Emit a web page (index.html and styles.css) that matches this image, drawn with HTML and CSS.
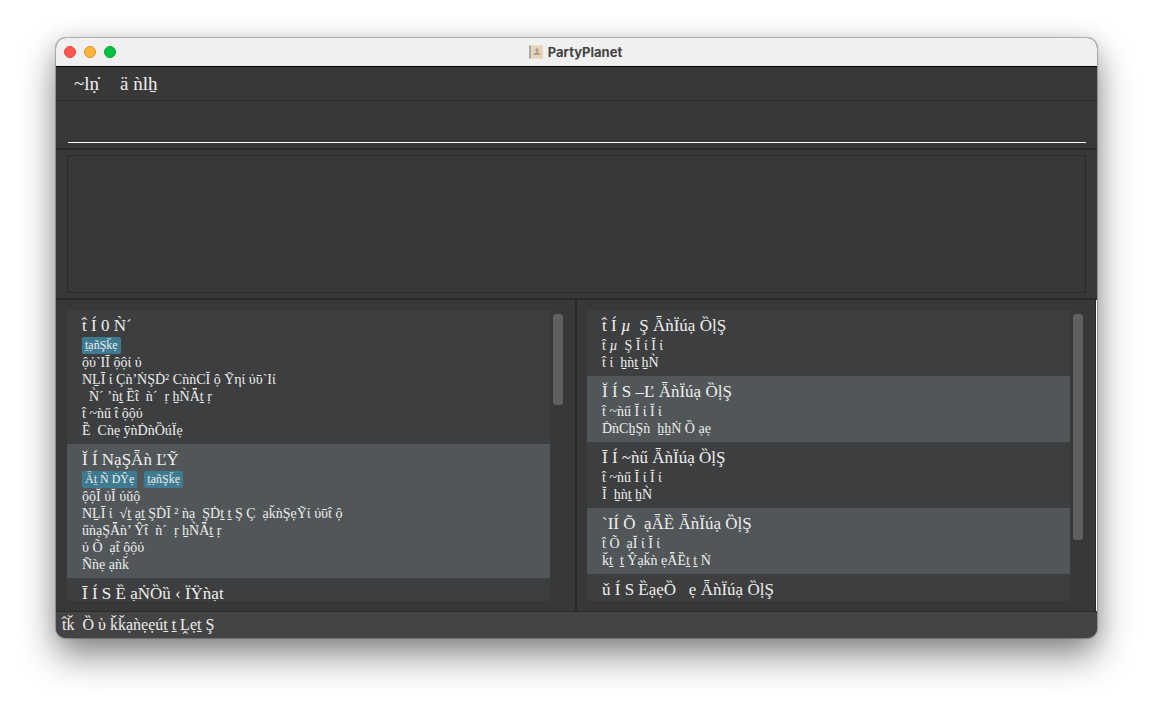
FILE: index.html
```
<!DOCTYPE html>
<html lang="en">
<head>
<meta charset="utf-8">
<title>PartyPlanet</title>
<link rel="stylesheet" href="styles.css">
</head>
<body>
<main class="window">
  <header class="titlebar">
    <div class="lights">
      <button class="light close" aria-label="Close"></button>
      <button class="light minimise" aria-label="Minimise"></button>
      <button class="light zoom" aria-label="Zoom"></button>
    </div>
    <h1 class="title">
      <svg class="app-icon" viewBox="0 0 14 14" aria-hidden="true">
        <rect x="0" y="0.5" width="14" height="13" rx="1" fill="#e9d3b4"/>
        <rect x="0" y="0.5" width="2" height="13" fill="#aaa9a7"/>
        <rect x="2" y="0.5" width="1" height="13" fill="#d9d5cf"/>
        <circle cx="8" cy="5" r="1.7" fill="#aaa197"/>
        <path d="M7.2 6h1.6v1.4L11.3 8.5V10H4.7V8.5l2.5-1.1z" fill="#aaa197"/>
      </svg>
      <span>PartyPlanet</span>
    </h1>
  </header>
  <nav class="menu">
    <button class="menu-item">~lṇ̇</button>
    <button class="menu-item">ä ǹlẖ</button>
  </nav>
  <section class="command"><input class="command-input" type="text" aria-label="Command"></section>
  <section class="result"><textarea class="result-text" readonly aria-label="Result"></textarea></section>
  <section class="panes">
    <div class="pane">
      <ul class="list">
        <li class="card">
          <h2 class="name">t̂ Í 0 Ǹˊ</h2>
          <div class="tags"><span class="tag">ṯạñŞǩẹ</span></div>
          <p class="line">ộύˋIĪ ộộί ύ</p>
          <p class="line">NḺĪ ί Çǹ’ṄŞḊ² CǹǹCĬ ộ Ỹηί ύῡˋIί</p>
          <p class="line">  Ǹˊ ’ǹṯ Ȅt̂  ǹˊ  ṛ ẖǸǞṯ ṛ</p>
          <p class="line">t̂ ~ǹű t̂ ộộύ</p>
          <p class="line">Ȅ  Cǹẹ ȳǹḊǹȌúÏẹ</p>
        </li>
        <li class="card">
          <h2 class="name">Ĭ Í NạŞǞǹ ĽỸ</h2>
          <div class="tags"><span class="tag">Ǟṯ Ñ ḊŶẹ</span><span class="tag">ṯạñŞǩẹ</span></div>
          <p class="line">ộộĬ ύĬ ύǔộ</p>
          <p class="line">NḺĪ ί  √ṯ ạṯ ŞḊĪ ² ǹạ  ŞḊṯ ṯ Ş Ç  ạǩǹŞẹỸί ύῡt̂ ộ</p>
          <p class="line">űǹạŞǞǹ’ Ŷt̂  ǹˊ  ṛ ẖǸǞṯ ṛ</p>
          <p class="line">ύ Õ  ạt̂ ộộύ</p>
          <p class="line">Ñǹẹ ạǹǩ</p>
        </li>
        <li class="card">
          <h2 class="name">Ī Í S Ȅ ạṄȌȕ ‹ ÏŸǹạt</h2>
        </li>
      </ul>
      <div class="scroll"><div class="thumb thumb-short"></div></div>
    </div>
    <div class="pane">
      <ul class="list">
        <li class="card">
          <h2 class="name">t̂ Í <i>µ</i>  Ş ǞǹÏúạ ȌḷŞ</h2>
          <p class="line">t̂ <i>µ</i>  Ş Ĭ ί Ĭ ί</p>
          <p class="line">t̂ ί  ẖǹṯ ẖǸ</p>
        </li>
        <li class="card">
          <h2 class="name">Ĭ Í S –Ľ ǞǹÏúạ ȌḷŞ</h2>
          <p class="line">t̂ ~ǹű Ĭ ί Ĭ ί</p>
          <p class="line">ḊǹCẖŞǹ  ẖẖṄ Ȍ ạẹ</p>
        </li>
        <li class="card">
          <h2 class="name">Ī Í ~ǹű ǞǹÏúạ ȌḷŞ</h2>
          <p class="line">t̂ ~ǹű Ĭ ί Ĭ ί</p>
          <p class="line">Ĭ  ẖǹṯ ẖǸ</p>
        </li>
        <li class="card">
          <h2 class="name">ˋIÍ Õ  ạǞȄ ǞǹÏúạ ȌḷŞ</h2>
          <p class="line">t̂ Õ  ạĬ ί Ĭ ί</p>
          <p class="line">ǩṯ  ṯ Ŷạǩǹ ẹǞȄṯ ṯ Ṅ</p>
        </li>
        <li class="card">
          <h2 class="name">ǔ Í S ȄạẹȌ   ẹ ǞǹÏúạ ȌḷŞ</h2>
        </li>
      </ul>
      <div class="scroll"><div class="thumb thumb-long"></div></div>
    </div>
  </section>
  <footer class="status">t̂ǩ  Ȍ ὺ ǩǩạǹẹẹúṯ ṯ Ḽẹṯ Ş</footer>
</main>
</body>
</html>
```
FILE: styles.css
```
* { box-sizing: border-box; }
body {
  margin: 0;
  padding: 38px 56px 74px;
  min-height: 100vh;
  display: flex;
  background: #fff;
  color: #eee;
  font-family: "Liberation Serif", "DejaVu Serif", serif;
  overflow: hidden;
}
h1, h2, p, ul { margin: 0; padding: 0; font-weight: normal; }
button { border: 0; padding: 0; background: none; color: inherit; font: inherit; }
.window {
  flex: 1;
  min-width: 0;
  height: calc(100vh - 112px);
  display: flex;
  flex-direction: column;
  background: #383838;
  border-radius: 10px;
  overflow: hidden;
  box-shadow: 0 0 1px 1px rgba(0,0,0,.25), 0 18px 36px rgba(0,0,0,.45), 0 2px 22px rgba(0,0,0,.12);
}
.titlebar {
  flex: none;
  height: 29px;
  display: grid;
  grid-template-columns: 1fr auto 1fr;
  align-items: center;
  background: #f0f0f0;
  border-bottom: 1px solid #000;
}
.lights { display: flex; gap: 8px; padding-left: 8px; }
.light { width: 12px; height: 12px; border-radius: 50%; border: 1px solid; }
.close { background: #ff5650; border-color: #e2443f; }
.minimise { background: #ffb339; border-color: #dd962b; }
.zoom { background: #00c242; border-color: #00a535; }
.title {
  display: flex;
  align-items: center;
  gap: 5px;
  padding-right: 2px;
  color: #424242;
  font: bold 13px/16px Inter, sans-serif;
}
.app-icon { width: 14px; height: 14px; }
.menu {
  flex: none;
  height: 34px;
  display: flex;
  align-items: center;
  gap: 21px;
  padding-left: 18px;
  border-bottom: 1px solid #292929;
}
.menu-item { font-size: 19px; line-height: 24px; white-space: pre; }
.command { flex: none; padding: 10px 11px 5px 12px; border-bottom: 2px solid #292929; }
.command-input {
  display: block;
  width: 100%;
  height: 32px;
  border: 0;
  border-bottom: 1px solid #fff;
  background: none;
  color: #fff;
  font: 18px "Liberation Serif", serif;
  outline: none;
}
.result { flex: none; padding: 5px 11px; border-bottom: 2px solid #292929; }
.result-text {
  display: block;
  width: 100%;
  height: 138px;
  border: 1px solid #292929;
  background: #383838;
  color: #fff;
  resize: none;
  outline: none;
}
.panes {
  flex: 1;
  min-height: 0;
  display: grid;
  grid-template-columns: calc(50% + 1px) 1fr;
  border-right: 1px solid #fff;
}
.pane {
  min-width: 0;
  min-height: 0;
  display: flex;
  padding: 10px 12px 10px 10px;
  border-right: 1px solid #292929;
}
.pane:first-child { padding-left: 11px; border-right-width: 2px; }
.list { flex: 1; min-width: 0; list-style: none; overflow: hidden; background: #3c3e3f; }
.card { display: flex; flex-direction: column; padding: 5px 15px; background: #3c3e3f; white-space: pre; }
.card:nth-child(even) { background: #515658; }
.name { font-size: 17px; line-height: 22px; height: 22px; }
.line { font-size: 14px; line-height: 17px; height: 17px; }
.tags { display: flex; gap: 7px; height: 17px; }
.tag {
  padding: 0 3px;
  border-radius: 2px;
  background: #3e7b91;
  font-size: 12px;
  line-height: 17px;
}
.scroll { flex: none; width: 13px; padding: 4px 0 4px 3px; }
.thumb { width: 10px; border-radius: 3px; background: #606060; }
.thumb-short { height: 32%; }
.thumb-long { height: 80%; }
.status {
  flex: none;
  height: 27px;
  padding-left: 6px;
  border-top: 1px solid #292929;
  background: #444;
  font-size: 16px;
  line-height: 26px;
  white-space: pre;
}
```
